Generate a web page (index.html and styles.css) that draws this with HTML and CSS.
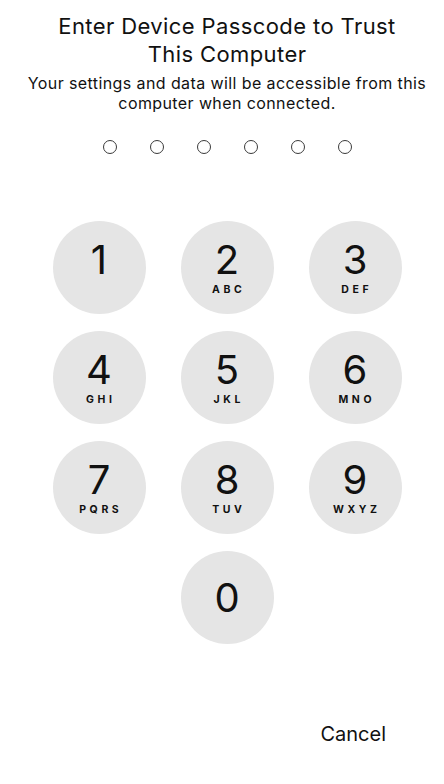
FILE: index.html
```html
<!DOCTYPE html>
<html lang="en">
<head>
  <meta charset="UTF-8">
  <title>Enter Device Passcode</title>
  <link rel="stylesheet" href="styles.css">
</head>
<body>
  <div class="screen">
    <div class="header">
      <h1>Enter Device Passcode to Trust This Computer</h1>
      <p>Your settings and data will be accessible from this computer when connected.</p>
    </div>

    <div class="dots">
      <span class="dot"></span>
      <span class="dot"></span>
      <span class="dot"></span>
      <span class="dot"></span>
      <span class="dot"></span>
      <span class="dot"></span>
    </div>

    <div class="keypad">
      <button class="key"><span class="num">1</span></button>
      <button class="key"><span class="num">2</span><span class="letters">ABC</span></button>
      <button class="key"><span class="num">3</span><span class="letters">DEF</span></button>
      <button class="key"><span class="num">4</span><span class="letters">GHI</span></button>
      <button class="key"><span class="num">5</span><span class="letters">JKL</span></button>
      <button class="key"><span class="num">6</span><span class="letters">MNO</span></button>
      <button class="key"><span class="num">7</span><span class="letters">PQRS</span></button>
      <button class="key"><span class="num">8</span><span class="letters">TUV</span></button>
      <button class="key"><span class="num">9</span><span class="letters">WXYZ</span></button>
      <button class="key key-zero"><span class="num">0</span></button>
    </div>

    <div class="footer">
      <a href="#" class="cancel">Cancel</a>
    </div>
  </div>
</body>
</html>
```

FILE: styles.css
```css
body {
  margin: 0;
  background: #fff;
  color: #111;
  font-family: Inter, 'Liberation Sans', sans-serif;
}
.screen {
  height: 784px;
  padding-left: 10px;
  display: flex;
  flex-direction: column;
  align-items: center;
}
.header {
  text-align: center;
  padding-top: 12px;
}
h1 {
  margin: 0 auto;
  width: 380px;
  font-size: 22px;
  line-height: 28px;
  font-weight: 400;
  letter-spacing: 0.4px;
}
.header p {
  margin: 5px 0 0;
  font-size: 16px;
  line-height: 20px;
  letter-spacing: 0.4px;
}
.dots {
  display: flex;
  gap: 33px;
  margin-top: 27px;
}
.dot {
  width: 12px;
  height: 12px;
  border: 1.6px solid #3a3a3a;
  border-radius: 50%;
}
.keypad {
  display: grid;
  grid-template-columns: repeat(3, 93px);
  grid-auto-rows: 93px;
  column-gap: 35px;
  row-gap: 17px;
  margin-top: 67px;
}
.key {
  border: none;
  border-radius: 50%;
  background: #e5e5e5;
  padding: 19px 0 0;
  display: flex;
  flex-direction: column;
  align-items: center;
  justify-content: flex-start;
  font-family: inherit;
  color: #111;
}
.num {
  font-size: 40px;
  line-height: 40px;
}
.letters {
  margin-top: 4px;
  font-size: 10.5px;
  line-height: 12px;
  font-weight: 700;
  letter-spacing: 3.6px;
  padding-left: 3.6px;
}
.key-zero {
  grid-column: 2;
  padding: 0;
  justify-content: center;
}
.footer {
  align-self: stretch;
  display: flex;
  justify-content: flex-end;
  margin-top: auto;
  padding: 0 58px 38px 0;
}
.cancel {
  font-size: 20px;
  line-height: 24px;
  color: #111;
  text-decoration: none;
}
```
